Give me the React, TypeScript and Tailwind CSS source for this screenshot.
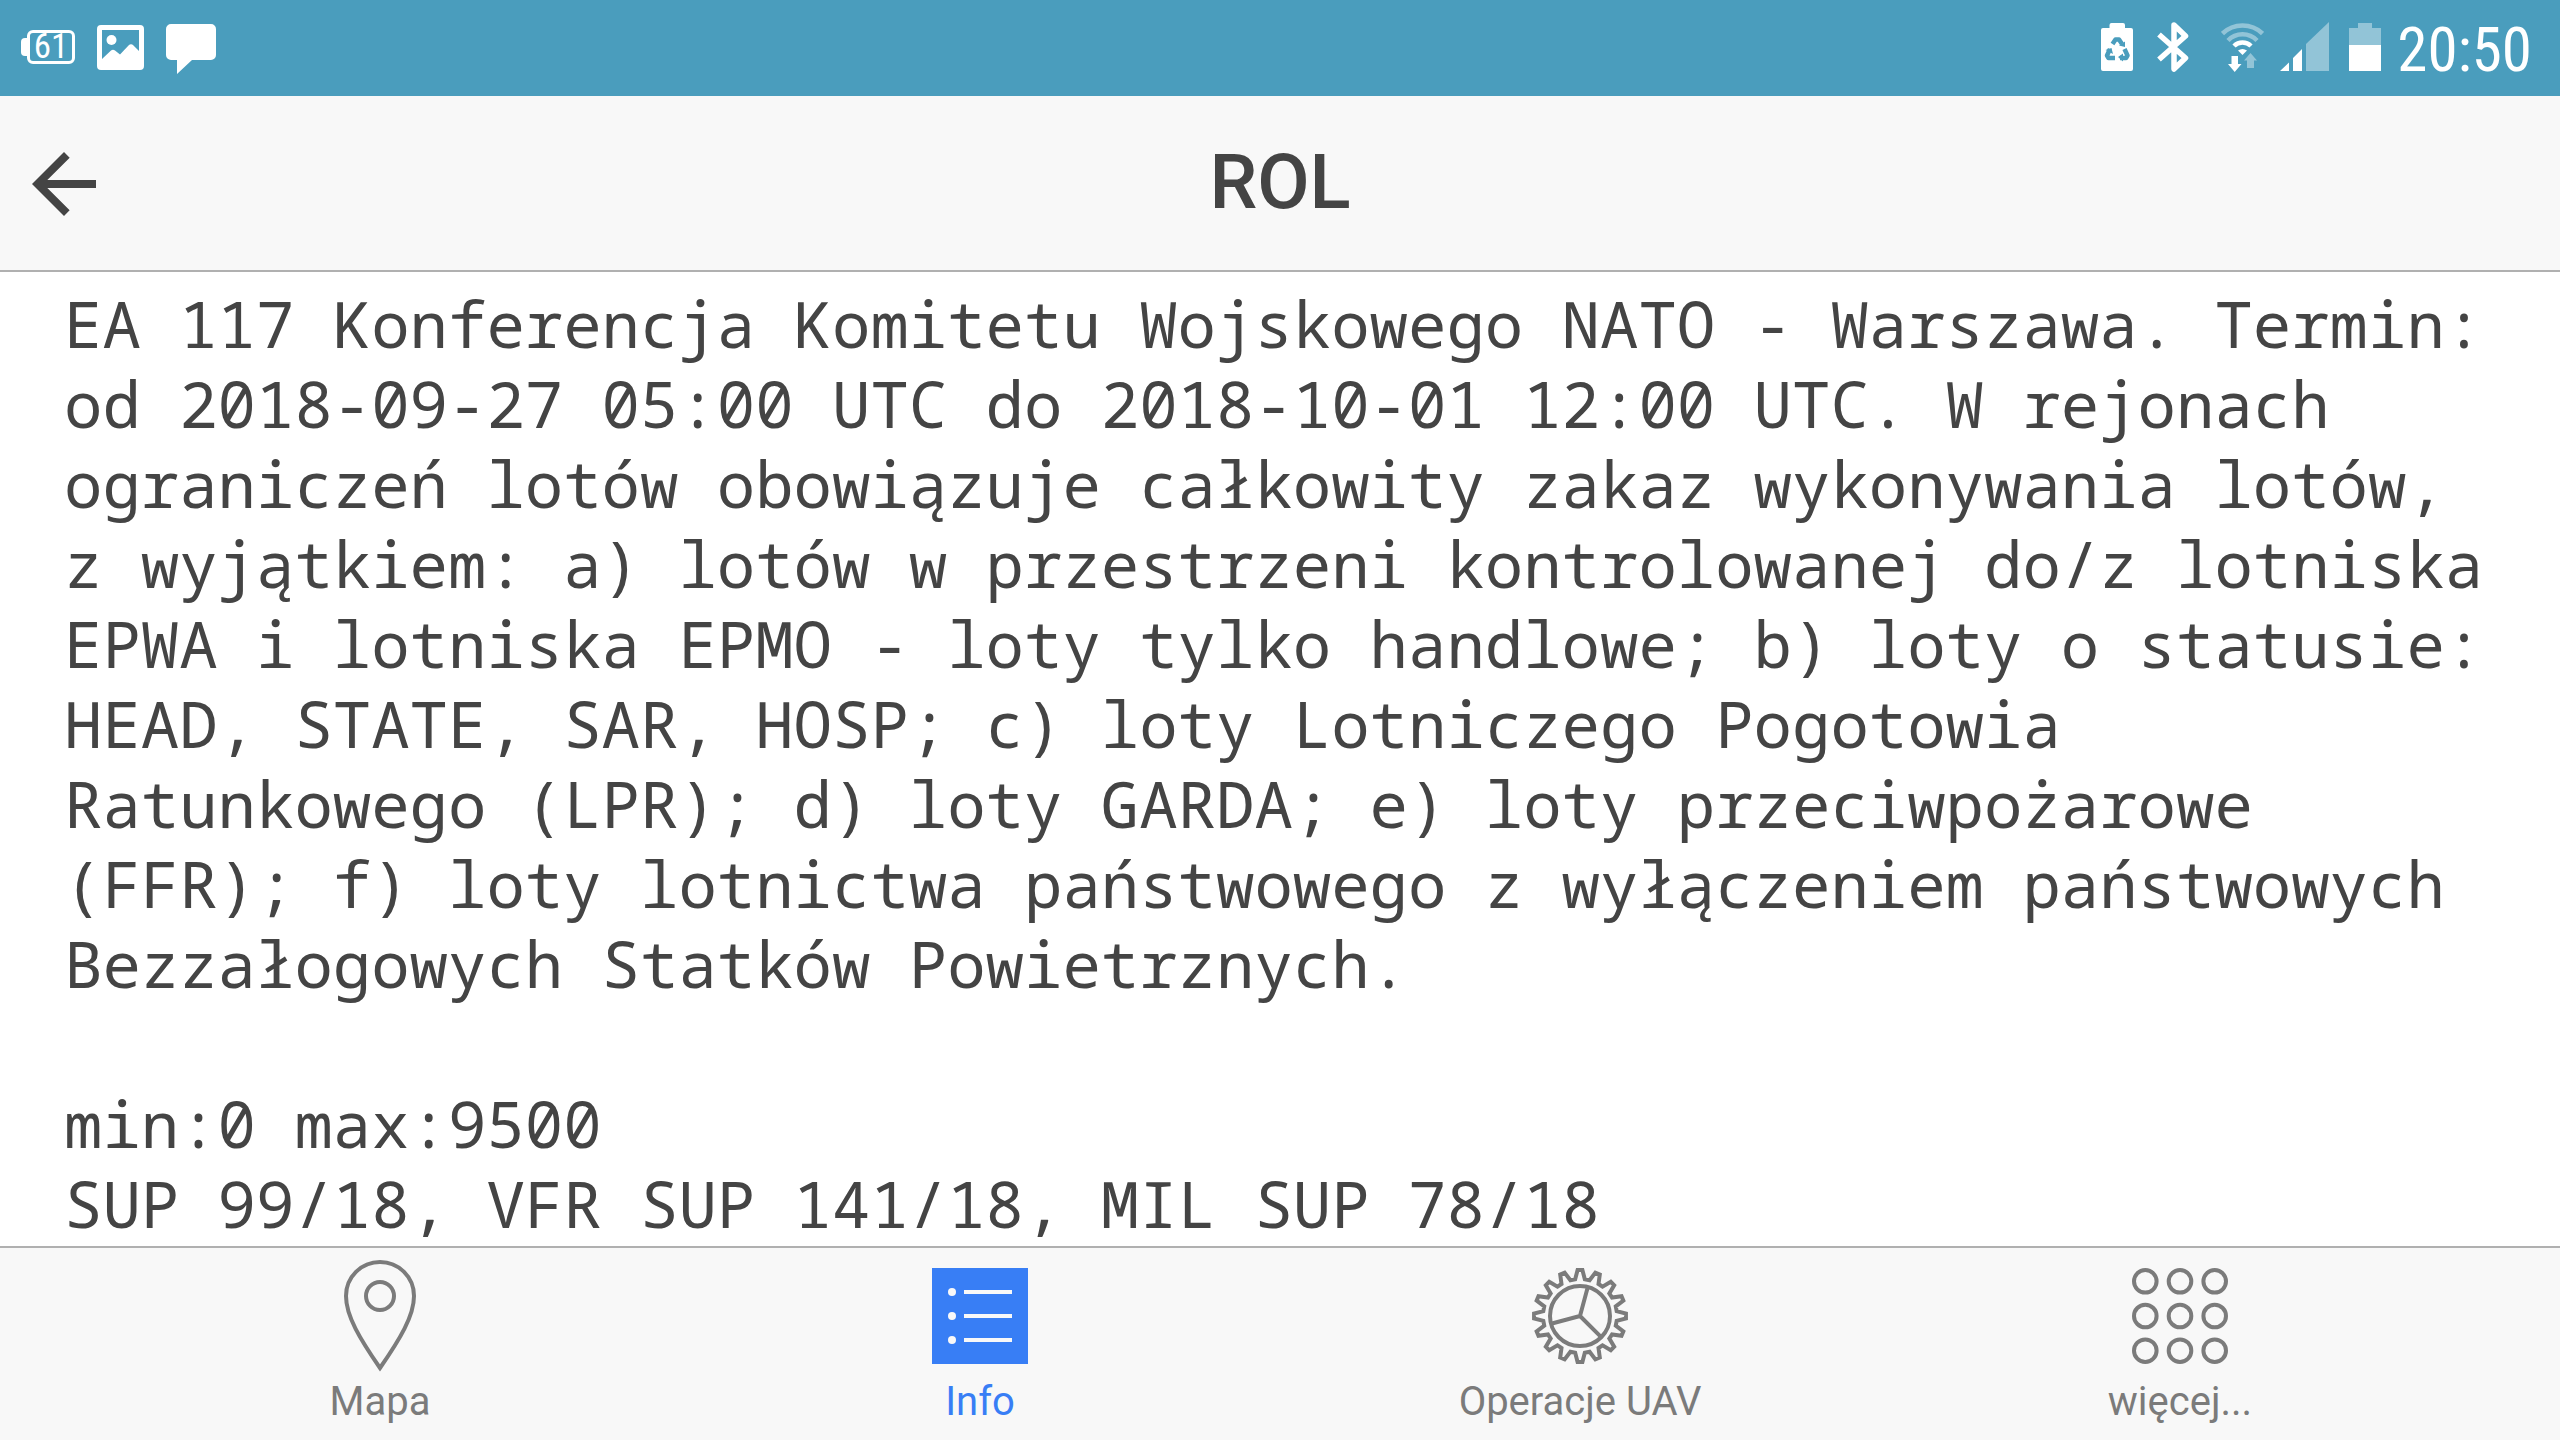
import type { ReactNode } from "react";

const description =
  "EA 117 Konferencja Komitetu Wojskowego NATO - Warszawa. Termin: od 2018-09-27 05:00 UTC do 2018-10-01 12:00 UTC. W rejonach ograniczeń lotów obowiązuje całkowity zakaz wykonywania lotów, z wyjątkiem: a) lotów w przestrzeni kontrolowanej do/z lotniska EPWA i lotniska EPMO - loty tylko handlowe; b) loty o statusie: HEAD, STATE, SAR, HOSP; c) loty Lotniczego Pogotowia Ratunkowego (LPR); d) loty GARDA; e) loty przeciwpożarowe (FFR); f) loty lotnictwa państwowego z wyłączeniem państwowych Bezzałogowych Statków Powietrznych.\n\nmin:0 max:9500\nSUP 99/18, VFR SUP 141/18, MIL SUP 78/18";

const TEETH = 16;

function polar(deg: number, r: number) {
  const a = (deg * Math.PI) / 180;
  return `${(48 + r * Math.sin(a)).toFixed(2)},${(48 - r * Math.cos(a)).toFixed(2)}`;
}

const gearPoints = Array.from({ length: TEETH }, (_, i) => {
  const a = (i * 360) / TEETH;
  return [polar(a - 3, 46), polar(a + 3, 46), polar(a + 7.5, 37), polar(a + 15, 37)].join(" ");
}).join(" ");

function StatusBar() {
  return (
    <div className="flex h-24 items-center justify-between bg-[#4a9dbd] pb-0.5 pl-[21px] pr-7 text-white">
      <div className="flex items-center gap-[22px]">
        <div className="flex items-center">
          <span className="h-[18px] w-1.5 rounded-l-sm bg-white" />
          <span className="flex h-[34px] w-12 items-center justify-center rounded-md border-3 border-white font-['Roboto_Condensed',Roboto,sans-serif] text-[35px] leading-[34px]">
            61
          </span>
        </div>
        <svg width="47" height="45" viewBox="0 0 47 45" fill="currentColor">
          <path
            fillRule="evenodd"
            d="M4 0H43A4 4 0 0 1 47 4V41A4 4 0 0 1 43 45H4A4 4 0 0 1 0 41V4A4 4 0 0 1 4 0ZM5 5V34L14 25.500Q16 24 18 25.500L23 29.500L31.500 20.500Q34 18 36.500 20.500L42 26V5Z"
          />
          <circle cx="14.500" cy="15" r="5" />
        </svg>
        <svg className="mt-1" width="50" height="50" viewBox="0 0 50 50" fill="currentColor">
          <path d="M5 0H45A5 5 0 0 1 50 5V31A5 5 0 0 1 45 36H26L11 50V36H5A5 5 0 0 1 0 31V5A5 5 0 0 1 5 0Z" />
        </svg>
      </div>

      <div className="flex items-center">
        <svg className="mr-6" width="32" height="50" viewBox="0 0 32 50">
          <path d="M8.500 3Q8.500 1 10.500 1H22Q24 1 24 3V6H30Q32 6 32 8V47Q32 49 30 49H2Q0 49 0 47V8Q0 6 2 6H8.500Z" fill="#fff" />
          <g fill="none" stroke="#4a9dbd" strokeWidth="4.500" strokeLinejoin="round">
            <path d="M11.500 22L14.500 17.500H18L21 22" />
            <path d="M9 27L6 33.500L7.500 36H14" />
            <path d="M23.500 27L26.500 33.500L25 36H19" />
          </g>
          <path d="M18 23.500L24 19.500V25ZM4.500 28L10.500 26L12 32ZM17 35L22 31.500V39.500Z" fill="#4a9dbd" />
        </svg>
        <svg className="mr-8" width="32" height="50" viewBox="0 0 32 50" fill="none" stroke="currentColor" strokeWidth="5.500" strokeLinejoin="round">
          <path d="M2 12.500L28.500 36L17 47V3L28.500 14L2 37.500" />
        </svg>
        <svg className="mr-4" width="43" height="50" viewBox="0 0 43 50" fill="none" stroke="currentColor">
          <g strokeWidth="4.500" opacity="0.400">
            <path d="M1.500 11.500A29 29 0 0 1 41.500 11.500" />
            <path d="M7 18.500A20 20 0 0 1 36 18.500" />
          </g>
          <path d="M13 24A12 12 0 0 1 30 24" strokeWidth="4.500" />
          <g fill="currentColor" stroke="none">
            <path d="M17 28.500Q21.500 25.500 26 28.500L21.500 33Z" />
            <path d="M10.500 34H17V42H20.500L13.700 50L7 42H10.500Z" />
            <path d="M29.500 31L36 38.500H33V46H26V38.500H23Z" opacity="0.400" />
          </g>
        </svg>
        <svg className="mr-5" width="49" height="50" viewBox="0 0 49 50" fill="currentColor">
          <path d="M0 49L9 40.500V49ZM13 49V36L22 27V49Z" />
          <path d="M26 49V22L49 0V49Z" opacity="0.400" />
        </svg>
        <svg className="mr-4" width="32" height="50" viewBox="0 0 32 50" fill="currentColor">
          <path d="M9 1H23V6H32V23H0V6H9Z" opacity="0.400" />
          <path d="M0 23H32V49H0Z" />
        </svg>
        <time className="pt-1.5 font-['Roboto_Condensed',Roboto,sans-serif] text-[61px] leading-[72px]">20:50</time>
      </div>
    </div>
  );
}

function Header({ title }: { title: string }) {
  return (
    <header className="grid h-44 grid-cols-[96px_1fr_96px] items-center border-b-2 border-[#b0b0b0] bg-[#f8f8f8] px-4">
      <button type="button" aria-label="Wstecz" className="cursor-pointer pt-0.5">
        <svg width="96" height="96" viewBox="0 0 24 24" fill="currentColor">
          <path d="M20 11H7.830l5.590-5.590L12 4l-8 8 8 8 1.410-1.410L7.830 13H20v-2z" />
        </svg>
      </button>
      <h1 className="pb-0.5 text-center text-[76px] font-medium leading-[88px]">{title}</h1>
    </header>
  );
}

function MapIcon() {
  return (
    <svg width="72" height="112" viewBox="0 0 72 112" fill="none" stroke="currentColor" strokeWidth="4">
      <path d="M36 108C16 79 2 56 2 36A34 34 0 0 1 70 36C70 56 56 79 36 108Z" />
      <circle cx="36" cy="36" r="14" />
    </svg>
  );
}

function InfoIcon() {
  return (
    <svg width="96" height="96" viewBox="0 0 96 96">
      <path d="M0 0H96V96H0Z" fill="currentColor" />
      {[24, 48, 72].map((y) => (
        <g key={y} fill="#f8f8f8">
          <circle cx="20" cy={y} r="4" />
          <rect x="32" y={y - 2} width="48" height="4" />
        </g>
      ))}
    </svg>
  );
}

function GearIcon() {
  return (
    <svg width="96" height="96" viewBox="0 0 96 96" fill="none" stroke="currentColor" strokeWidth="4">
      <polygon points={gearPoints} />
      <circle cx="48" cy="48" r="30" />
      <path d="M48 48L55.800 19M48 48L19 55.800M48 48L69.200 69.200" />
    </svg>
  );
}

function MoreIcon() {
  const centers = [13.3, 48, 82.7];
  return (
    <svg width="96" height="96" viewBox="0 0 96 96" fill="none" stroke="currentColor" strokeWidth="4">
      {centers.map((y) => centers.map((x) => <circle key={`${x}-${y}`} cx={x} cy={y} r="11.300" />))}
    </svg>
  );
}

const tabs: { id: string; label: string; icon: ReactNode }[] = [
  { id: "mapa", label: "Mapa", icon: <MapIcon /> },
  { id: "info", label: "Info", icon: <InfoIcon /> },
  { id: "uav", label: "Operacje UAV", icon: <GearIcon /> },
  { id: "wiecej", label: "więcej...", icon: <MoreIcon /> },
];

function TabBar({ active }: { active: string }) {
  return (
    <nav className="flex border-t-2 border-[#b0b0b0] bg-[#f8f8f8] px-20 pb-3.5 pt-3">
      {tabs.map((tab) => (
        <button
          key={tab.id}
          type="button"
          aria-current={tab.id === active ? "page" : undefined}
          className={`flex flex-1 cursor-pointer flex-col items-center gap-1.5 ${
            tab.id === active ? "text-[#387ef5]" : "text-[#7b7b7b]"
          }`}
        >
          <span className="flex h-28 items-center">{tab.icon}</span>
          <span className="text-[40px] leading-[48px]">{tab.label}</span>
        </button>
      ))}
    </nav>
  );
}

export default function App() {
  return (
    <div className="flex min-h-screen flex-col bg-white font-[Roboto,sans-serif] text-[#444]">
      <StatusBar />
      <Header title="ROL" />
      <main className="flex-1 px-16 pt-3">
        <p className="whitespace-pre-wrap font-['Noto_Sans_Mono','DejaVu_Sans_Mono',monospace] text-[64px] leading-[80px]">
          {description}
        </p>
      </main>
      <TabBar active="info" />
    </div>
  );
}
